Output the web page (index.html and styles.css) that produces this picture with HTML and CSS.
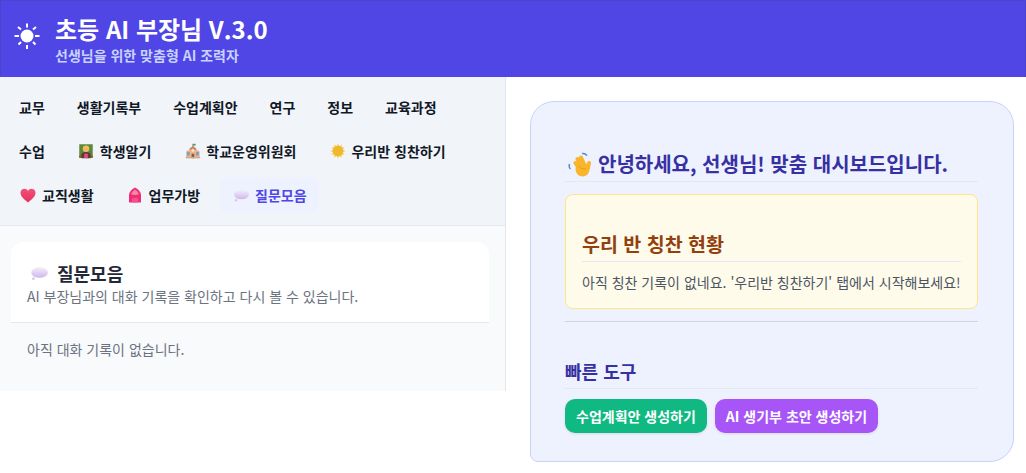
FILE: index.html
```html
<!DOCTYPE html>
<html lang="ko">
<head>
    <meta charset="UTF-8">
    <meta name="viewport" content="width=device-width, initial-scale=1.0">
    <title>초등 AI 부장님</title>
    <link rel="stylesheet" href="styles.css">
</head>
<body>
    <header class="top">
        <svg class="top-icon" viewBox="0 0 28 28" stroke="white" stroke-width="2">
            <circle cx="14" cy="14" r="6.5" fill="white" stroke="none"/>
            <path d="M14 1.500v4M14 23v4M1.500 14h4.500M22 14h4.500M5 5l3 2.500M23 5l-3 2.500M5.500 22.500l2.500-2.500M22.500 22.500l-2.500-2.500"/>
        </svg>
        <div>
            <h1>초등 AI 부장님 V.3.0</h1>
            <p>선생님을 위한 맞춤형 AI 조력자</p>
        </div>
    </header>
    <div class="main">
        <div class="left">
            <nav class="tabs">
                <a class="tab">교무</a>
                <a class="tab">생활기록부</a>
                <a class="tab">수업계획안</a>
                <a class="tab">연구</a>
                <a class="tab">정보</a>
                <a class="tab">교육과정</a>
                <a class="tab">수업</a>
                <a class="tab">
                    <svg class="emoji" viewBox="-1 -1 20 20">
                        <rect x="1.500" y="1.500" width="15" height="15" fill="#5d8a3a"/>
                        <rect x="1.500" y="14" width="15" height="2.500" fill="#8a5a2b"/>
                        <path d="M4 17v-4q0-3 5-3t5 3v4z" fill="#5b3a3a"/>
                        <rect x="7" y="12" width="4" height="5" fill="#e0527a"/>
                        <circle cx="9" cy="6.500" r="3.600" fill="#f2c14e"/>
                        <circle cx="9" cy="7.500" r="2.400" fill="#eeb27c"/>
                    </svg>
                    학생알기
                </a>
                <a class="tab">
                    <svg class="emoji" viewBox="-2 -1 20 20">
                        <path d="M9 1v4" stroke="#8a8a7a" stroke-width="1"/>
                        <path d="M9 1h3v2H9z" fill="#4f9a6a"/>
                        <path d="M1.500 9.500 5.500 7 9 4l3.500 3 4 2.500V17h-15z" fill="#f0b48e"/>
                        <path d="M5 6.500 9 3.500l4 3-1 1.500-3-2-3 2z" fill="#c77f5c"/>
                        <rect x="2.500" y="10" width="3" height="4" fill="#6aa5c8"/>
                        <rect x="12.500" y="10" width="3" height="4" fill="#6aa5c8"/>
                        <rect x="7.500" y="12" width="3" height="5" fill="#8a5a44"/>
                        <circle cx="9" cy="8.500" r="1.300" fill="#fbe9d8"/>
                        <rect x="1" y="15.500" width="16" height="1.500" fill="#cfa98f"/>
                    </svg>
                    학교운영위원회
                </a>
                <a class="tab">
                    <svg class="emoji" viewBox="-1 0 18 18">
                        <path d="M16.500 9 13.830 7.710 15.500 5.250 12.540 5.460 12.750 2.500 10.290 4.170 9 1.500 7.710 4.170 5.250 2.500 5.460 5.460 2.500 5.250 4.170 7.710 1.500 9 4.170 10.290 2.500 12.750 5.460 12.540 5.250 15.500 7.710 13.830 9 16.500 10.290 13.830 12.750 15.500 12.540 12.540 15.500 12.750 13.830 10.290z" fill="#f3cc52"/>
                        <circle cx="9" cy="9" r="5.200" fill="#efb92e"/>
                    </svg>
                    우리반 칭찬하기
                </a>
                <a class="tab">
                    <svg class="emoji" viewBox="0 0 18 18">
                        <defs>
                            <linearGradient id="heart" x1="0" y1="0" x2="0" y2="1">
                                <stop offset="0" stop-color="#f2507a"/>
                                <stop offset="1" stop-color="#e8305f"/>
                            </linearGradient>
                        </defs>
                        <path d="M9 16.500C4 12.500 1.500 10 1.500 6.800 1.500 4.300 3.500 2.800 5.300 2.800 7 2.800 8.300 3.700 9 5c.7-1.300 2-2.200 3.700-2.200 1.800 0 3.800 1.500 3.800 4 0 3.200-2.500 5.700-7.500 9.700z" fill="url(#heart)"/>
                    </svg>
                    교직생활
                </a>
                <a class="tab">
                    <svg class="emoji" viewBox="0 0 18 18">
                        <path d="M3 16.500V9Q3.500 4 9 1.500 14.500 4 15 9v7.500z" fill="#ee2f78"/>
                        <path d="M5 8Q6.500 5 9 3.500 11.500 5 13 8q-4 2-8 0z" fill="#f58a9a"/>
                        <rect x="6" y="12" width="6" height="4.500" rx="1" fill="#f5508e"/>
                    </svg>
                    업무가방
                </a>
                <a class="tab active">
                    <svg class="emoji" viewBox="0 0 18 18">
                        <defs>
                            <linearGradient id="bubble" x1="0" y1="0" x2="0" y2="1">
                                <stop offset="0" stop-color="#f5effb"/>
                                <stop offset="1" stop-color="#cdb8ea"/>
                            </linearGradient>
                        </defs>
                        <ellipse cx="9.500" cy="8.500" rx="7.500" ry="4.800" fill="url(#bubble)"/>
                        <circle cx="4" cy="14.200" r="1.300" fill="#d8c8ee"/>
                    </svg>
                    질문모음
                </a>
            </nav>
            <section class="content">
                <div class="card-head">
                    <h2>
                        <svg class="emoji big" viewBox="0 0 18 18">
                            <ellipse cx="9.500" cy="8.500" rx="7.500" ry="4.800" fill="url(#bubble)"/>
                            <circle cx="4" cy="14.200" r="1.300" fill="#d8c8ee"/>
                        </svg>
                        질문모음
                    </h2>
                    <p>AI 부장님과의 대화 기록을 확인하고 다시 볼 수 있습니다.</p>
                </div>
                <p class="empty">아직 대화 기록이 없습니다.</p>
            </section>
        </div>
        <div class="right">
            <div class="panel">
                <h2 class="panel-title">
                    <svg class="emoji hand" viewBox="0 0 26 26">
                        <g stroke="#f9b62a" stroke-width="4" stroke-linecap="round">
                            <path d="M14 17 10.500 12M16 14 12.500 8M19.500 14 16 6.500M23 17l1-5"/>
                        </g>
                        <circle cx="17.500" cy="18.500" r="7" fill="#f9b62a"/>
                        <path d="M13 14.500q3 4.500 8 3.500" fill="none" stroke="#ee9a1e" stroke-width="1"/>
                        <path d="M17 2.500q3-.5 5 2M4.500 13q-1 3 1 5" fill="none" stroke="#4a90d9" stroke-width="1.500"/>
                    </svg>
                    안녕하세요, 선생님! 맞춤 대시보드입니다.
                </h2>
                <div class="praise">
                    <h3>우리 반 칭찬 현황</h3>
                    <p>아직 칭찬 기록이 없네요. '우리반 칭찬하기' 탭에서 시작해보세요!</p>
                </div>
                <hr>
                <h3 class="tools-title">빠른 도구</h3>
                <div class="tools">
                    <button class="green">수업계획안 생성하기</button>
                    <button class="purple">AI 생기부 초안 생성하기</button>
                </div>
            </div>
        </div>
    </div>
</body>
</html>
```

FILE: styles.css
```css
* {
    box-sizing: border-box;
}

body {
    margin: 0;
    height: 473px;
    overflow: hidden;
    background-color: white;
    font-family: "Noto Sans CJK KR", "Noto Sans", sans-serif;
}

.top {
    display: flex;
    align-items: center;
    gap: 14px;
    height: 77px;
    padding: 0 12px;
    background-color: #4f46e5;
    border: 1px solid #4a43cc;
    border-bottom: none;
    color: white;
}

.top-icon {
    width: 28px;
    height: 28px;
    margin-bottom: 7px;
}

.top h1 {
    margin: 0;
    font-size: 24px;
    line-height: 32px;
    font-weight: 700;
}

.top p {
    margin: 0;
    font-size: 14px;
    line-height: 20px;
    font-weight: 700;
    color: #c7d2fe;
}

.main {
    display: flex;
    align-items: flex-start;
}

.left {
    width: 506px;
    background-color: #f8fafc;
    border-right: 1px solid #e2e8f0;
}

.tabs {
    display: flex;
    flex-wrap: wrap;
    gap: 8px;
    padding: 12px 7px;
    background-color: #f1f5f9;
    border-bottom: 1px solid #e2e8f0;
}

.tab {
    display: flex;
    align-items: center;
    gap: 5px;
    height: 36px;
    padding: 0 12px;
    border-radius: 8px;
    font-size: 14px;
    font-weight: 700;
    color: #111827;
}

.tab.active {
    background-color: #eef2ff;
    color: #4f46e5;
}

.emoji {
    width: 18px;
    height: 18px;
    flex-shrink: 0;
}

.emoji.big {
    width: 20px;
    height: 20px;
    margin: 0 2px;
}

.emoji.hand {
    width: 26px;
    height: 26px;
}

.content {
    height: 165px;
    padding: 16px 16px 0 11px;
}

.card-head {
    height: 81px;
    padding: 16px;
    background-color: white;
    border-radius: 12px 12px 0 0;
    border-bottom: 1px solid #e2e8f0;
}

.card-head h2 {
    display: flex;
    align-items: center;
    gap: 6px;
    margin: 0;
    font-size: 18px;
    line-height: 30px;
    color: #1f2937;
}

.card-head p {
    margin: -1px 0 0;
    font-size: 14px;
    line-height: 18px;
    color: #6b7280;
}

.empty {
    margin: 16px 16px 0;
    font-size: 14px;
    line-height: 20px;
    color: #6b7280;
}

.right {
    flex: 1;
    padding: 24px 12px 0 24px;
}

.panel {
    height: 361px;
    padding: 48px 35px 0 34px;
    background-color: #eef2ff;
    border: 1px solid #c7d2fe;
    border-radius: 24px 24px 24px 8px;
}

.panel-title {
    display: flex;
    align-items: center;
    gap: 7px;
    margin: 0;
    padding-bottom: 4px;
    font-size: 20px;
    line-height: 27px;
    color: #3730a3;
    border-bottom: 1px solid #e2e8f0;
}

.praise {
    height: 115px;
    margin-top: 12px;
    padding: 36px 16px 0;
    background-color: #fffbeb;
    border: 1px solid #fde68a;
    border-radius: 8px;
}

.praise h3 {
    margin: 0;
    padding-bottom: 4px;
    font-size: 19.5px;
    line-height: 26px;
    color: #92400e;
    border-bottom: 1px solid #e2e8f0;
}

.praise p {
    margin: 10px 0 0;
    font-size: 14px;
    line-height: 20px;
    color: #4b5563;
}

hr {
    margin: 12px 0 0;
    border: 0;
    border-top: 1px solid #cbd5e1;
}

.tools-title {
    margin: 36px 0 0;
    padding-bottom: 4px;
    font-size: 18px;
    line-height: 26px;
    color: #3730a3;
    border-bottom: 1px solid #e2e8f0;
}

.tools {
    display: flex;
    gap: 8px;
    margin-top: 10px;
}

button {
    height: 34px;
    padding: 0 11px;
    border: none;
    border-radius: 10px;
    font-family: inherit;
    font-size: 14px;
    font-weight: 700;
    color: white;
    cursor: pointer;
    box-shadow: 0 1px 3px rgba(0, 0, 0, 0.1);
}

.green {
    background-color: #10b981;
}

.purple {
    background-color: #a855f7;
}
```
